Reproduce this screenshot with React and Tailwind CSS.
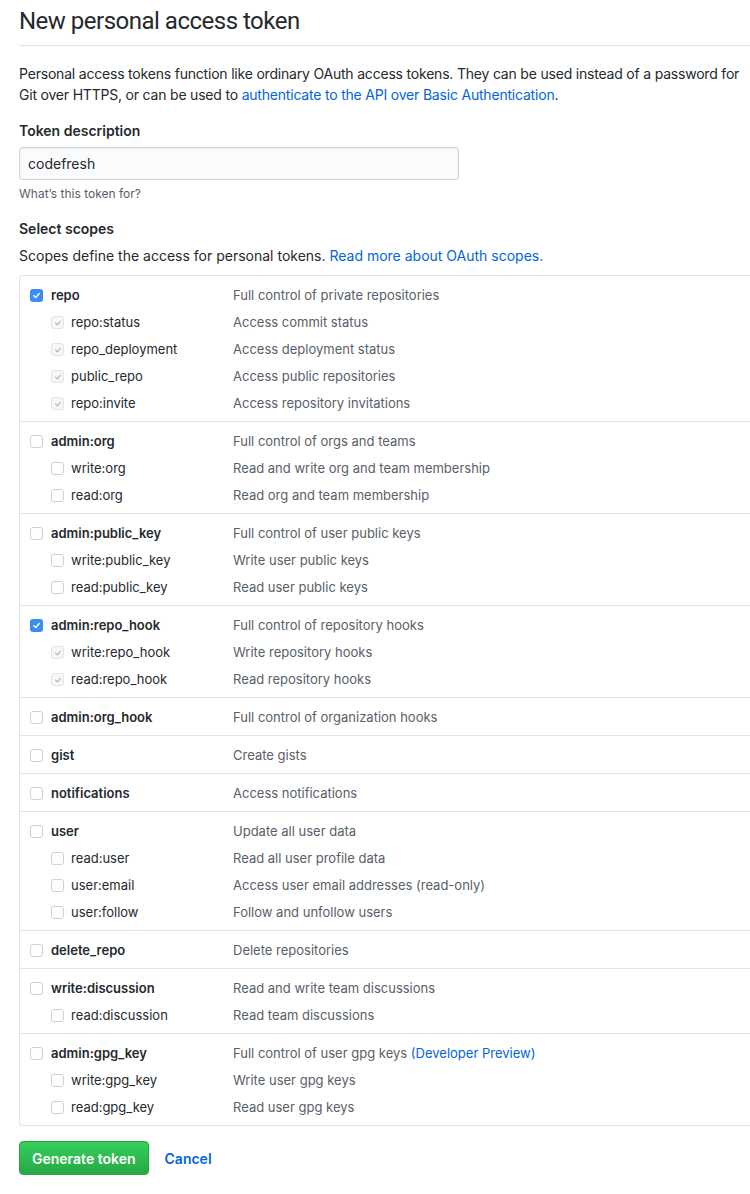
import React from "react";

const groups = [
  {
    name: "repo",
    desc: "Full control of private repositories",
    checked: true,
    subs: [
      ["repo:status", "Access commit status"],
      ["repo_deployment", "Access deployment status"],
      ["public_repo", "Access public repositories"],
      ["repo:invite", "Access repository invitations"],
    ],
  },
  {
    name: "admin:org",
    desc: "Full control of orgs and teams",
    subs: [
      ["write:org", "Read and write org and team membership"],
      ["read:org", "Read org and team membership"],
    ],
  },
  {
    name: "admin:public_key",
    desc: "Full control of user public keys",
    subs: [
      ["write:public_key", "Write user public keys"],
      ["read:public_key", "Read user public keys"],
    ],
  },
  {
    name: "admin:repo_hook",
    desc: "Full control of repository hooks",
    checked: true,
    subs: [
      ["write:repo_hook", "Write repository hooks"],
      ["read:repo_hook", "Read repository hooks"],
    ],
  },
  { name: "admin:org_hook", desc: "Full control of organization hooks", subs: [] },
  { name: "gist", desc: "Create gists", subs: [] },
  { name: "notifications", desc: "Access notifications", subs: [] },
  {
    name: "user",
    desc: "Update all user data",
    subs: [
      ["read:user", "Read all user profile data"],
      ["user:email", "Access user email addresses (read-only)"],
      ["user:follow", "Follow and unfollow users"],
    ],
  },
  { name: "delete_repo", desc: "Delete repositories", subs: [] },
  {
    name: "write:discussion",
    desc: "Read and write team discussions",
    subs: [["read:discussion", "Read team discussions"]],
  },
  {
    name: "admin:gpg_key",
    desc: "Full control of user gpg keys",
    preview: true,
    subs: [
      ["write:gpg_key", "Write user gpg keys"],
      ["read:gpg_key", "Read user gpg keys"],
    ],
  },
];

function Box({ state }) {
  // state: "on" | "off" | "implied"
  if (state === "on") {
    return (
      <span className="flex h-[13px] w-[13px] items-center justify-center rounded-[3px] bg-[#3b8cf3]">
        <svg width="9" height="9" viewBox="0 0 10 10" fill="none">
          <path d="M2 5.2 4.2 7.3 8 2.8" stroke="white" strokeWidth="1.6" strokeLinecap="round" strokeLinejoin="round" />
        </svg>
      </span>
    );
  }
  if (state === "implied") {
    return (
      <span className="flex h-[13px] w-[13px] items-center justify-center rounded-[3px] border border-[#e4e4e4] bg-[#f7f7f7]">
        <svg width="8" height="8" viewBox="0 0 10 10" fill="none">
          <path d="M2 5.2 4.2 7.3 8 2.8" stroke="#b0b0b0" strokeWidth="1.4" strokeLinecap="round" strokeLinejoin="round" />
        </svg>
      </span>
    );
  }
  return <span className="block h-[13px] w-[13px] rounded-[3px] border border-[#d0d0d0] bg-white" />;
}

export default function App() {
  return (
    <div
      className="min-h-screen w-full bg-white text-[#24292e]"
      style={{ fontFamily: "Inter, 'Noto Sans', sans-serif" }}
    >
      <div className="pl-[19px]">
        {/* HEADER */}
        <div className="border-b border-[#e1e4e8] pt-[6px] pb-[9px]">
          <h1 className="font-['Roboto',sans-serif] text-[24px] font-normal leading-[30px] tracking-[-0.5px]">
            New personal access token
          </h1>
        </div>

        <p className="mt-[17px] whitespace-nowrap text-[14px] leading-[21px] tracking-[-0.2px]">
          Personal access tokens function like ordinary OAuth access tokens. They can be used instead of a password for
          <br />
          Git over HTTPS, or can be used to{" "}
          <a className="text-[#0366d6]">authenticate to the API over Basic Authentication</a>.
        </p>

        {/* TOKEN DESCRIPTION */}
        <div className="mt-[15px] text-[14px] font-semibold leading-[21px]">Token description</div>
        <div className="mt-[6px] flex h-[33px] w-[440px] items-center rounded-[3px] border border-[#d1d5da] bg-[#fafbfc] px-[8px] text-[14px] shadow-[inset_0_1px_2px_rgba(27,31,35,0.075)]">
          codefresh
        </div>
        <div className="mt-[6px] text-[12px] leading-[16px] text-[#586069]">What’s this token for?</div>

        {/* SCOPES */}
        <div className="mt-[16px] text-[14px] font-semibold leading-[21px]">Select scopes</div>
        <p className="mt-[6px] text-[14px] leading-[21px]">
          Scopes define the access for personal tokens.{" "}
          <a className="text-[#0366d6]">Read more about OAuth scopes.</a>
        </p>

        <div className="mt-[9px] rounded-l-[3px] border-y border-l border-[#e1e4e8]">
          {groups.map((g, gi) => (
            <div key={g.name} className={`pt-[6px] pb-[4px] ${gi > 0 ? "border-t border-[#e1e4e8]" : ""}`}>
              <div className="flex h-[27px] items-center text-[13px]">
                <div className="flex w-[213px] items-center">
                  <span className="ml-[10px] mr-[8px]">
                    <Box state={g.checked ? "on" : "off"} />
                  </span>
                  <span className="font-semibold">{g.name}</span>
                </div>
                <span className="text-[#586069]">
                  {g.desc}
                  {g.preview && <span className="text-[#0366d6]"> (Developer Preview)</span>}
                </span>
              </div>
              {g.subs.map(([n, d]) => (
                <div key={n} className="flex h-[27px] items-center text-[13px]">
                  <div className="flex w-[213px] items-center">
                    <span className="ml-[31px] mr-[7px]">
                      <Box state={g.checked ? "implied" : "off"} />
                    </span>
                    <span>{n}</span>
                  </div>
                  <span className="text-[#586069]">{d}</span>
                </div>
              ))}
            </div>
          ))}
        </div>

        {/* ACTIONS */}
        <div className="mt-[15px] flex items-center gap-[16px]">
          <button className="h-[34px] rounded-[4px] border border-[#28a745] bg-gradient-to-b from-[#34d058] to-[#28a745] px-[12px] text-[14px] font-semibold text-white">
            Generate token
          </button>
          <a className="text-[14px] font-semibold text-[#0366d6]">Cancel</a>
        </div>
      </div>
    </div>
  );
}
